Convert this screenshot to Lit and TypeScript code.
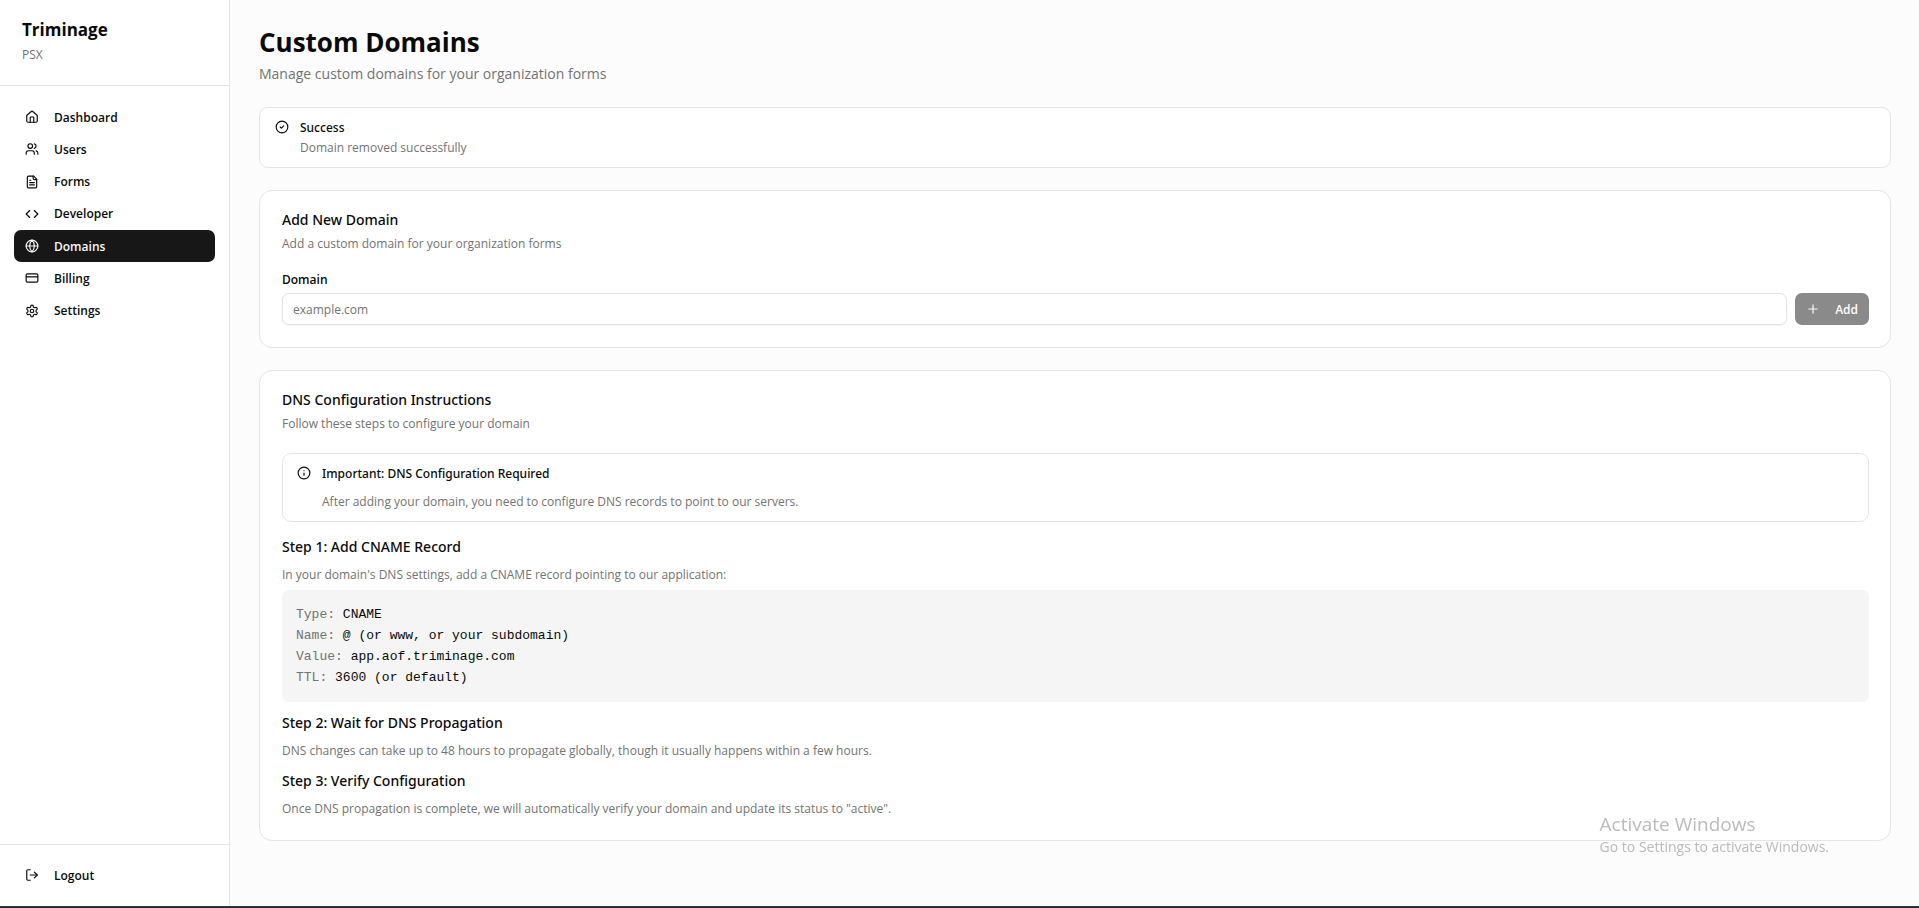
import { LitElement, html, css, svg } from "lit";
import { customElement, property, state } from "lit/decorators.js";
import { classMap } from "lit/directives/class-map.js";

const icons = {
  home: svg`<path d="M15 21v-8a1 1 0 0 0-1-1h-4a1 1 0 0 0-1 1v8"/><path d="M3 10a2 2 0 0 1 .709-1.528l7-5.999a2 2 0 0 1 2.582 0l7 5.999A2 2 0 0 1 21 10v9a2 2 0 0 1-2 2H5a2 2 0 0 1-2-2z"/>`,
  users: svg`<path d="M16 21v-2a4 4 0 0 0-4-4H6a4 4 0 0 0-4 4v2"/><circle cx="9" cy="7" r="4"/><path d="M22 21v-2a4 4 0 0 0-3-3.87"/><path d="M16 3.128a4 4 0 0 1 0 7.744"/>`,
  file: svg`<path d="M15 2H6a2 2 0 0 0-2 2v16a2 2 0 0 0 2 2h12a2 2 0 0 0 2-2V7Z"/><path d="M14 2v4a2 2 0 0 0 2 2h4"/><path d="M10 9H8"/><path d="M16 13H8"/><path d="M16 17H8"/>`,
  code: svg`<path d="m16 18 6-6-6-6"/><path d="m8 6-6 6 6 6"/>`,
  globe: svg`<circle cx="12" cy="12" r="10"/><path d="M12 2a14.5 14.5 0 0 0 0 20 14.5 14.5 0 0 0 0-20"/><path d="M2 12h20"/>`,
  card: svg`<rect width="20" height="14" x="2" y="5" rx="2"/><path d="M2 10h20"/>`,
  settings: svg`<path d="M12.22 2h-.44a2 2 0 0 0-2 2v.18a2 2 0 0 1-1 1.73l-.43.25a2 2 0 0 1-2 0l-.15-.08a2 2 0 0 0-2.73.73l-.22.38a2 2 0 0 0 .73 2.73l.15.1a2 2 0 0 1 1 1.72v.51a2 2 0 0 1-1 1.74l-.15.09a2 2 0 0 0-.73 2.73l.22.38a2 2 0 0 0 2.73.73l.15-.08a2 2 0 0 1 2 0l.43.25a2 2 0 0 1 1 1.73V20a2 2 0 0 0 2 2h.44a2 2 0 0 0 2-2v-.18a2 2 0 0 1 1-1.73l.43-.25a2 2 0 0 1 2 0l.15.08a2 2 0 0 0 2.73-.73l.22-.39a2 2 0 0 0-.73-2.73l-.15-.08a2 2 0 0 1-1-1.74v-.5a2 2 0 0 1 1-1.74l.15-.09a2 2 0 0 0 .73-2.73l-.22-.38a2 2 0 0 0-2.73-.73l-.15.08a2 2 0 0 1-2 0l-.43-.25a2 2 0 0 1-1-1.73V4a2 2 0 0 0-2-2z"/><circle cx="12" cy="12" r="3"/>`,
  logout: svg`<path d="m16 17 5-5-5-5"/><path d="M21 12H9"/><path d="M9 21H5a2 2 0 0 1-2-2V5a2 2 0 0 1 2-2h4"/>`,
  check: svg`<circle cx="12" cy="12" r="10"/><path d="m9 12 2 2 4-4"/>`,
  info: svg`<circle cx="12" cy="12" r="10"/><path d="M12 16v-4"/><path d="M12 8h.01"/>`,
  plus: svg`<path d="M5 12h14"/><path d="M12 5v14"/>`,
};
type IconName = keyof typeof icons;

@customElement("ui-icon")
export class UiIcon extends LitElement {
  @property() name: IconName = "home";
  static styles = css`
    :host { display: block; flex: none; width: 14px; height: 14px; }
    .glyph { display: block; width: 100%; height: 100%; fill: none; stroke: currentColor; stroke-width: 2; stroke-linecap: round; stroke-linejoin: round; }
  `;
  render() {
    return html`<svg class="glyph" viewBox="0 0 24 24" aria-hidden="true">${icons[this.name]}</svg>`;
  }
}

@customElement("ui-alert")
export class UiAlert extends LitElement {
  @property() icon: IconName = "info";
  @property() heading = "";
  @property({ type: Boolean, reflect: true }) spaced = false;
  static styles = css`
    :host { display: flex; gap: 11px; padding: 11px 15px 10px; border: 1px solid #e5e5e5; border-radius: 9px; background: #fff; font-size: 12px; }
    :host([spaced]) { padding-left: 14px; }
    .icon { margin-top: 1px; }
    .body { display: grid; gap: 2px; }
    :host([spaced]) .body { gap: 10px; }
    .title { margin: 0; font-family: "Noto Sans", "Open Sans", sans-serif; line-height: 18px; font-weight: 500; }
    .text { margin: 0; line-height: 18px; color: #737373; }
  `;
  render() {
    return html`
      <ui-icon class="icon" name=${this.icon}></ui-icon>
      <div class="body">
        <p class="title">${this.heading}</p>
        <p class="text"><slot></slot></p>
      </div>`;
  }
}

@customElement("app-sidebar")
export class AppSidebar extends LitElement {
  @state() private active = "Domains";
  private items: [string, IconName][] = [
    ["Dashboard", "home"],
    ["Users", "users"],
    ["Forms", "file"],
    ["Developer", "code"],
    ["Domains", "globe"],
    ["Billing", "card"],
    ["Settings", "settings"],
  ];
  static styles = css`
    :host { display: flex; flex-direction: column; flex: none; box-sizing: border-box; width: 230px; border-right: 1px solid #e5e5e5; background: #fff; }
    .brand { display: grid; gap: 3px; padding: 17px 22px 21px; border-bottom: 1px solid #e5e5e5; }
    .name { margin: 0; font-size: 17px; line-height: 26px; font-weight: 700; }
    .org { margin: 0; font-size: 12px; line-height: 18px; color: #737373; }
    .nav { flex: 1; padding: 15px 14px; }
    .list { display: grid; grid-auto-rows: 1fr; height: 226px; margin: 0; padding: 0; list-style: none; }
    .item { display: flex; align-items: center; gap: 15px; box-sizing: border-box; width: 100%; height: 32px; padding: 0 11px; border: 0; border-radius: 7px; background: none; color: inherit; font: inherit; font-size: 12px; font-weight: 600; text-decoration: none; cursor: pointer; }
    .active { background: #171717; color: #fafafa; }
    .foot { padding: 14px 14px 15px; border-top: 1px solid #e5e5e5; }
  `;
  private select(e: Event, label: string) {
    e.preventDefault();
    this.active = label;
  }
  render() {
    return html`
      <div class="brand">
        <h2 class="name">Triminage</h2>
        <p class="org">PSX</p>
      </div>
      <nav class="nav">
        <ul class="list">
          ${this.items.map(([label, icon]) => html`
            <li>
              <a href="#" class=${classMap({ item: true, active: label === this.active })} @click=${(e: Event) => this.select(e, label)}>
                <ui-icon name=${icon}></ui-icon><span>${label}</span>
              </a>
            </li>`)}
        </ul>
      </nav>
      <div class="foot">
        <button class="item" type="button"><ui-icon name="logout"></ui-icon><span>Logout</span></button>
      </div>`;
  }
}

@customElement("app-root")
export class AppRoot extends LitElement {
  @state() private domain = "";
  private records = [
    ["Type:", "CNAME"],
    ["Name:", "@ (or www, or your subdomain)"],
    ["Value:", "app.aof.triminage.com"],
    ["TTL:", "3600 (or default)"],
  ];
  static styles = css`
    :host { display: flex; flex-direction: column; min-height: 100vh; background: #fcfcfc; color: #0a0a0a; font-family: "Open Sans", "Noto Sans", sans-serif; font-size: 12px; }
    .shell { display: flex; flex: 1; }
    .main { display: flex; flex-direction: column; flex: 1; gap: 22px; min-width: 0; padding: 22px 28px 22px 29px; }
    .page-title { margin: 0; font-size: 26px; line-height: 40px; font-weight: 700; }
    .page-text { margin: 0; font-size: 14px; line-height: 23px; color: #737373; }
    .card { padding: 22px 21px 22px 22px; border: 1px solid #e5e5e5; border-radius: 13px; background: #fff; }
    .card-head { display: grid; gap: 8px; margin-bottom: 20px; }
    .card-title { margin: 0; font-family: "Noto Sans", "Open Sans", sans-serif; font-size: 14px; line-height: 14px; font-weight: 500; }
    .text { margin: 0; line-height: 18px; color: #737373; }
    .field { display: grid; gap: 7px; }
    .label { line-height: 13px; font-weight: 600; }
    .row { display: flex; gap: 8px; }
    .input { flex: 1; min-width: 0; box-sizing: border-box; height: 32px; padding: 0 10px; border: 1px solid #e5e5e5; border-radius: 7px; background: #fff; color: inherit; font: inherit; box-shadow: 0 1px 2px rgba(0, 0, 0, 0.05); }
    .input::placeholder { color: #737373; opacity: 1; }
    .add { display: flex; align-items: center; gap: 15px; height: 32px; padding: 0 11px; border: 0; border-radius: 7px; background: #171717; color: #fafafa; font: inherit; font-weight: 600; }
    .add:disabled { opacity: 0.5; }
    .steps { display: grid; gap: 12px; }
    .notice { margin-bottom: 4px; }
    .step { display: grid; gap: 10px; }
    .step-title { margin: 0; font-family: "Noto Sans", "Open Sans", sans-serif; font-size: 14px; line-height: 18px; font-weight: 500; }
    .example { display: grid; gap: 6px; }
    .code { padding: 14px; border-radius: 7px; background: #f5f5f5; font-family: "Liberation Mono", monospace; font-size: 13px; line-height: 21px; }
    .line { margin: 0; }
    .key { color: #737373; }
    .watermark { position: fixed; right: 90px; bottom: 51px; color: rgba(120, 120, 120, 0.5); pointer-events: none; }
    .wm-title { margin: 0; font-size: 19px; line-height: 26px; }
    .wm-text { margin: 0; font-size: 14px; line-height: 20px; }
    .taskbar { height: 1px; border-top: 1px solid #3a3d48; background: #1c1e2e; }
  `;
  render() {
    return html`
      <div class="shell">
        <app-sidebar></app-sidebar>
        <main class="main">
          <header>
            <h1 class="page-title">Custom Domains</h1>
            <p class="page-text">Manage custom domains for your organization forms</p>
          </header>
          <ui-alert icon="check" heading="Success" role="status">Domain removed successfully</ui-alert>
          <section class="card">
            <div class="card-head">
              <h2 class="card-title">Add New Domain</h2>
              <p class="text">Add a custom domain for your organization forms</p>
            </div>
            <div class="field">
              <label class="label" for="domain">Domain</label>
              <div class="row">
                <input class="input" id="domain" type="text" placeholder="example.com" .value=${this.domain}
                  @input=${(e: Event) => (this.domain = (e.target as HTMLInputElement).value)} />
                <button class="add" type="button" ?disabled=${!this.domain}><ui-icon name="plus"></ui-icon><span>Add</span></button>
              </div>
            </div>
          </section>
          <section class="card">
            <div class="card-head">
              <h2 class="card-title">DNS Configuration Instructions</h2>
              <p class="text">Follow these steps to configure your domain</p>
            </div>
            <div class="steps">
              <ui-alert class="notice" spaced icon="info" heading="Important: DNS Configuration Required">After adding your domain, you need to configure DNS records to point to our servers.</ui-alert>
              <div class="step">
                <h3 class="step-title">Step 1: Add CNAME Record</h3>
                <div class="example">
                  <p class="text">In your domain's DNS settings, add a CNAME record pointing to our application:</p>
                  <div class="code">
                    ${this.records.map(([k, v]) => html`<p class="line"><span class="key">${k}</span> ${v}</p>`)}
                  </div>
                </div>
              </div>
              <div class="step">
                <h3 class="step-title">Step 2: Wait for DNS Propagation</h3>
                <p class="text">DNS changes can take up to 48 hours to propagate globally, though it usually happens within a few hours.</p>
              </div>
              <div class="step">
                <h3 class="step-title">Step 3: Verify Configuration</h3>
                <p class="text">Once DNS propagation is complete, we will automatically verify your domain and update its status to "active".</p>
              </div>
            </div>
          </section>
        </main>
      </div>
      <div class="watermark">
        <p class="wm-title">Activate Windows</p>
        <p class="wm-text">Go to Settings to activate Windows.</p>
      </div>
      <div class="taskbar"></div>`;
  }
}
